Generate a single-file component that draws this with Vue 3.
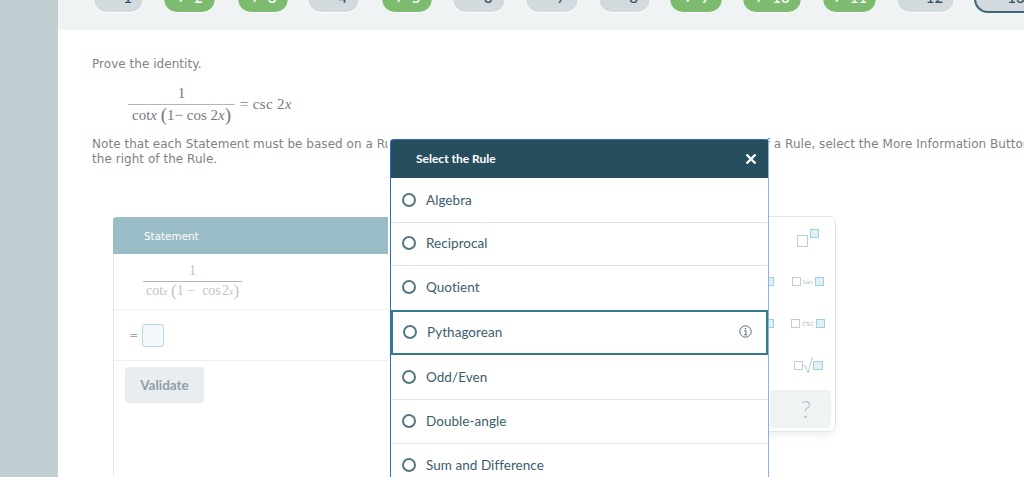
<script setup>
const pills = [
  { n: 1, w: 51, s: 'todo', x: 93, mark: true },
  { n: 2, w: 53, s: 'done', x: 163 },
  { n: 3, w: 52, s: 'done', x: 237 },
  { n: 4, w: 53, s: 'todo', x: 307, mark: true },
  { n: 5, w: 52, s: 'done', x: 381 },
  { n: 6, w: 54, s: 'todo', x: 452 },
  { n: 7, w: 54, s: 'todo', x: 525 },
  { n: 8, w: 53, s: 'todo', x: 598 },
  { n: 9, w: 54, s: 'done', x: 669 },
  { n: 10, w: 60, s: 'done', x: 742 },
  { n: 11, w: 55, s: 'done', x: 822 },
  { n: 12, w: 59, s: 'todo', x: 896 },
  { n: 13, w: 66, s: 'current', x: 974 }
].map((p, i, a) => ({ ...p, gap: i ? p.x - a[i - 1].x - a[i - 1].w : 0 }))
const rulesTop = ['Algebra', 'Reciprocal', 'Quotient']
const rulesBottom = ['Odd/Even', 'Double-angle', 'Sum and Difference']
</script>

<template>
  <div class="page">
    <aside class="rail"></aside>
    <main class="main">
      <nav class="pills">
        <div
          v-for="p in pills"
          :key="p.n"
          class="pill"
          :class="p.s"
          :style="{ width: p.w + 'px', marginLeft: p.gap + 'px' }"
        >
          <span class="slot"><span v-if="p.s === 'done'" class="tick">✓</span><i v-else-if="p.mark" class="mark"></i></span>{{ p.n }}
        </div>
      </nav>

      <section class="content">
        <p class="prompt">Prove the identity.</p>
        <div class="formula">
          <span class="frac">
            <span class="num">1</span>
            <span class="den">cot<i>x</i> <span class="paren">(</span>1− cos 2<i>x</i><span class="paren">)</span></span>
          </span>
          <span class="rhs">= csc 2<i>x</i></span>
        </div>
        <p class="note">Note that each Statement must be based on a Rule chosen from the Rule menu. To see a detailed description of a Rule, select the More Information Button to<br>the right of the Rule.</p>

        <div class="work">
          <div class="table">
            <div class="thead">Statement</div>
            <div class="row first">
              <span class="frac faint">
                <span class="num">1</span>
                <span class="den">cot<i>x</i> <span class="paren">(</span>1 −&nbsp; cos&#8202;2<i>x</i><span class="paren">)</span></span>
              </span>
            </div>
            <div class="row second">
              <span class="eq">=</span>
              <span class="answer"></span>
            </div>
            <button class="validate" type="button">Validate</button>
          </div>

          <div class="palette">
            <div class="pal-row r1">
              <span></span>
              <span class="pal-item power"><b class="g big"></b><b class="c sup"></b></span>
            </div>
            <div class="pal-row">
              <b class="c peek"></b>
              <span class="pal-item"><b class="g"></b><em class="tan">tan</em><b class="c"></b></span>
            </div>
            <div class="pal-row">
              <b class="c peek"></b>
              <span class="pal-item"><b class="g"></b><em>csc</em><b class="c"></b></span>
            </div>
            <div class="pal-row">
              <span></span>
              <span class="pal-item root">
                <b class="g"></b>
                <svg width="10" height="18" viewBox="0 0 10 18"><path d="M0.5 10 L2 9.5 L5 17 L9 1.5 L10 1.5" fill="none" stroke="#b9c6cb" stroke-width="1"/></svg>
                <b class="c wide"></b>
              </span>
            </div>
            <div class="help">?</div>
          </div>
        </div>
      </section>
    </main>

    <div class="modal">
      <header class="modal-head">
        <span class="title">Select the Rule</span>
        <svg width="12" height="12" viewBox="0 0 12 12"><path d="M1.5 1.5 L10.5 10.5 M10.5 1.5 L1.5 10.5" stroke="#fff" stroke-width="2.4"/></svg>
      </header>
      <div v-for="r in rulesTop" :key="r" class="rule"><i class="radio"></i>{{ r }}</div>
      <div class="rule focus">
        <i class="radio"></i>Pythagorean
        <svg class="info" width="13" height="13" viewBox="0 0 13 13">
          <circle cx="6.5" cy="6.5" r="5.7" fill="none" stroke="#4f6f7d" stroke-width="1"/>
          <path d="M5.2 5.7 H7 V9.8 M5.2 9.8 H8.2" fill="none" stroke="#4f6f7d" stroke-width="1"/>
          <circle cx="6.5" cy="3.6" r=".8" fill="#4f6f7d"/>
        </svg>
      </div>
      <div v-for="r in rulesBottom" :key="r" class="rule"><i class="radio"></i>{{ r }}</div>
    </div>
  </div>
</template>

<style>
html, body { margin: 0; background: #fff; overflow: hidden; }
</style>

<style scoped>
.page {
  position: relative;
  display: flex;
  width: 1024px;
  height: 477px;
  overflow: hidden;
  background: #fff;
  font-family: "DejaVu Sans", Verdana, sans-serif;
}
.rail { flex: 0 0 58px; background: #c3ced2; }
.main { flex: 1; min-width: 0; }

.pills {
  display: flex;
  height: 30px;
  padding-left: 35px;
  background: #eff3f4;
  overflow: hidden;
}
.pill {
  flex: none;
  box-sizing: border-box;
  height: 28px;
  margin-top: -15px;
  padding-bottom: 5px;
  border: 1px solid #fff;
  border-radius: 14px;
  display: flex;
  align-items: center;
  justify-content: center;
  gap: 6px;
  font: 500 15px Lato, sans-serif;
  color: #34515e;
}
.slot {
  width: 12px;
  display: flex;
  justify-content: center;
  height: 14px;
}
.todo { background: #d3dadd; }
.done { background: #7cbb70; color: #fff; }
.current { background: #d3dadd; border: 2px solid #3f6679; }
.tick { font-size: 10px; line-height: 14px; margin-top: 2px; }
.mark {
  display: block;
  width: 6px;
  height: 2px;
  margin-top: 8px;
  background: #8fa3ac;
}

.content { padding: 27px 0 0 34px; }
.prompt, .note {
  margin: 0;
  font-size: 12px;
  line-height: 15px;
  letter-spacing: .04px;
  color: #808284;
  white-space: nowrap;
}
.formula {
  display: flex;
  align-items: center;
  height: 42px;
  margin: 11px 0 0 36px;
  font-family: "Liberation Serif", serif;
  font-size: 15px;
  color: #77797b;
}
.frac { display: inline-flex; flex-direction: column; align-items: center; }
.num { line-height: 19px; padding-bottom: 1px; }
.den {
  padding: 0 4px;
  height: 20px;
  line-height: 20px;
  border-top: 1px solid #b5b5b5;
  white-space: nowrap;
}
.paren { font-size: 19px; font-weight: 400; line-height: 16px; vertical-align: -1px; }
.rhs { margin-left: 5px; letter-spacing: .3px; }
.note { margin-top: 12px; }

.work {
  display: flex;
  justify-content: space-between;
  width: 723px;
  margin: 50px 0 0 21px;
}
.table {
  width: 275px;
  height: 300px;
  box-sizing: border-box;
  border-left: 1px solid #e5e8ea;
}
.thead {
  height: 37px;
  margin-left: -1px;
  padding-left: 31px;
  background: #9abcc6;
  border-radius: 4px 0 0 0;
  color: #fff;
  font-size: 10.4px;
  line-height: 38px;
}
.row { border-bottom: 1px solid #edf0f1; box-sizing: border-box; }
.first {
  height: 56px;
  padding: 8px 0 0 29px;
  font-family: "Liberation Serif", serif;
  font-size: 14px;
  color: #c0c4c6;
}
.first .num { line-height: 17px; padding-bottom: 2px; }
.first .den { height: 18px; line-height: 18px; padding: 0 3px; }
.first .den i { font-size: 10px; }
.first .paren { font-size: 17px; }
.second {
  height: 51px;
  display: flex;
  align-items: center;
  padding-left: 15px;
  gap: 4px;
  color: #a2a8ab;
  font-size: 11px;
}
.answer {
  width: 20px;
  height: 21px;
  border: 1px solid #b8d6df;
  border-radius: 3px;
  background: #f3f9fc;
}
.validate {
  display: block;
  width: 79px;
  height: 36px;
  margin: 6px 0 0 11px;
  border: 0;
  border-radius: 4px;
  background: #e9edef;
  color: #8fa0a8;
  font: 700 13.5px Lato, sans-serif;
}

.palette {
  position: relative;
  width: 136px;
  height: 216px;
  box-sizing: border-box;
  margin-top: -1px;
  border: 1px solid #dfe5e7;
  border-radius: 7px;
  box-shadow: 0 5px 8px -4px rgba(120, 140, 150, .22);
}
.pal-row {
  display: grid;
  grid-template-columns: 73px 1fr;
  align-items: center;
  height: 42px;
}
.pal-row.r1 { height: 43px; }
.pal-item {
  display: flex;
  align-items: center;
  justify-content: center;
  gap: 2px;
  width: 68px;
}
.pal-row b { display: block; box-sizing: border-box; width: 9px; height: 9px; }
.g { border: 1px solid #c3ccd0; background: #fff; }
.c { border: 1px solid #a4d0dc; background: #dff1f6; }
.peek { justify-self: end; }
.pal-item em { font: 7.5px "DejaVu Sans", sans-serif; color: #b5bfc4; }
.pal-item em.tan { font-size: 6px; }
.pal-row .big { width: 11px; height: 12px; margin-top: 4px; }
.pal-row .sup { margin-bottom: 10px; }
.root { gap: 0; }
.pal-row .wide { width: 10px; border-top-color: #b9c6cb; }
.help {
  position: absolute;
  right: 4px;
  bottom: 3px;
  box-sizing: border-box;
  width: 61px;
  height: 38px;
  padding-left: 11px;
  border-radius: 3px;
  background: #eff3f4;
  color: #b3bfc4;
  font: 300 24px/38px Lato, sans-serif;
  text-align: center;
}

.modal {
  position: absolute;
  left: 390px;
  top: 139px;
  width: 379px;
  height: 360px;
  box-sizing: border-box;
  background: #fff;
  border-left: 1px solid #2f6ac4;
  border-right: 1px solid #8fb1e6;
  border-top: 1px solid #2f6ac4;
  border-radius: 4px 4px 0 0;
  box-shadow: -2px -3px 0 #fff;
  font-family: Lato, sans-serif;
  color: #3b5d6b;
}
.modal-head {
  display: flex;
  align-items: center;
  justify-content: space-between;
  height: 38px;
  padding: 0 11px 0 25px;
  background: #264e5e;
  color: #fff;
  font-size: 12px;
  font-weight: 700;
}
.title { margin-bottom: 2px; }
.rule {
  box-sizing: border-box;
  display: flex;
  align-items: center;
  height: 44px;
  padding: 0 0 2px 11px;
  gap: 10px;
  font-size: 13.5px;
  letter-spacing: .05px;
  border-bottom: 1px solid #dfe3e5;
}
.rule:nth-child(2) { height: 45px; padding-bottom: 1px; }
.rule:nth-child(3) { height: 43px; }
.rule:nth-child(6) { height: 45px; padding-bottom: 1px; }
.rule:nth-child(4) { border-bottom: 0; }
.radio {
  box-sizing: border-box;
  flex: none;
  width: 14px;
  height: 14px;
  border: 2px solid #557784;
  border-radius: 50%;
}
.focus {
  height: 45px;
  padding: 0 0 2px 10px;
  border: 2px solid #337a8c;
  position: relative;
}
.info { position: absolute; right: 14px; top: 13px; }
</style>
